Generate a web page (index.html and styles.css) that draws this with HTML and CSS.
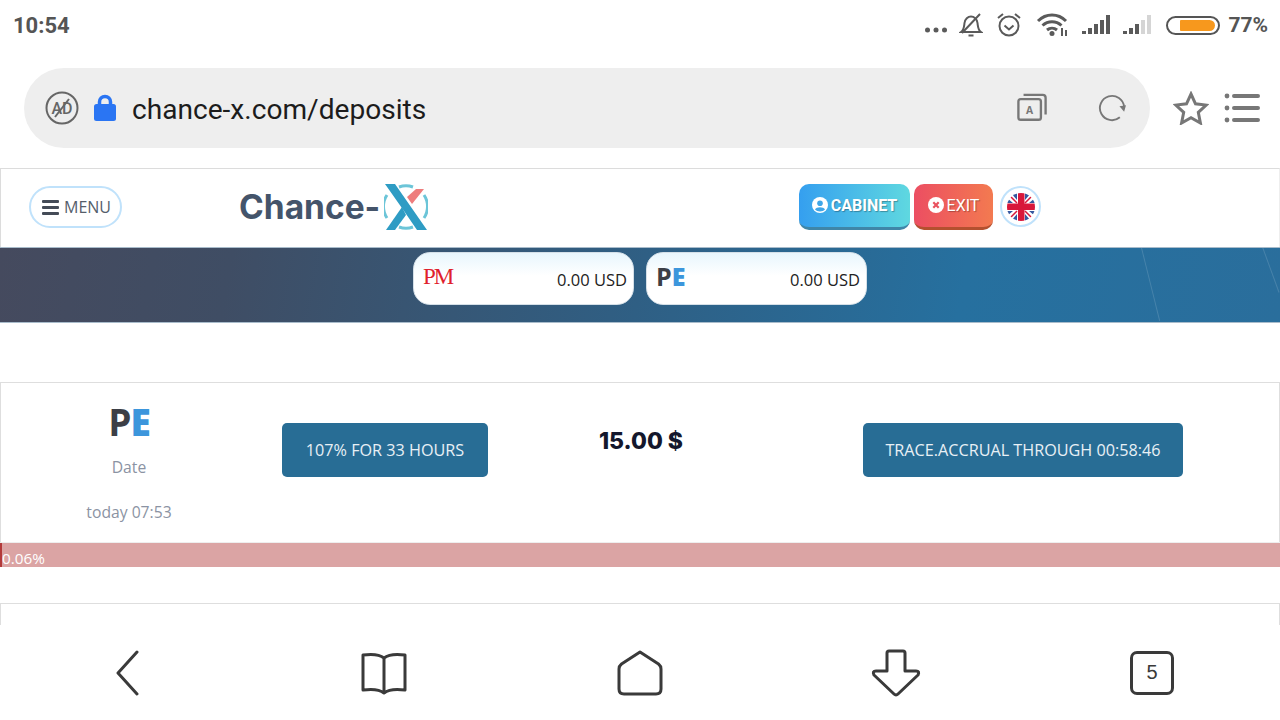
FILE: index.html
```html
<!DOCTYPE html>
<html>
<head>
<meta charset="utf-8">
<title>chance-x.com/deposits</title>
<link rel="stylesheet" href="styles.css">
</head>
<body>

<!-- phone status bar -->
<div class="statusbar">
  <span class="clock">10:54</span>
  <div class="status-icons">
    <svg class="ico-dots" width="24" height="8" viewBox="0 0 24 8"><circle cx="3.500" cy="4" r="2.500"/><circle cx="12" cy="4" r="2.500"/><circle cx="20.500" cy="4" r="2.500"/></svg>
    <svg class="ico-bell" width="24" height="26" viewBox="0 0 24 26"><path d="M2 20c3-2 3-5 3.500-9C6 7 9 4.500 12 4.500S18 7 18.500 11c.5 4 .5 7 3.500 9z"/><path d="M9.500 23.500h5M3 21L21 2"/></svg>
    <svg class="ico-alarm" width="26" height="26" viewBox="0 0 26 26"><circle cx="13" cy="14" r="9.500"/><path d="M8.500 13.500l4.500 4 4.500-4M2 6l5-4M24 6l-5-4"/></svg>
    <svg class="ico-wifi" width="34" height="24" viewBox="0 0 34 24"><path d="M2 8c8-8 20-8 28 0M6.500 12.500c5.500-5 13.500-5 19 0M11 17c3-2.500 7-2.500 10 0"/><circle cx="16" cy="20.500" r="2.500" class="fill"/><path d="M26 15v8M30 17v6" class="thin"/></svg>
    <svg class="ico-signal" width="30" height="22" viewBox="0 0 30 22"><rect x="0" y="17" width="4" height="3"/><rect x="6" y="14" width="4" height="6"/><rect x="12" y="10" width="4" height="10"/><rect x="18" y="6" width="4" height="14"/><rect x="24" y="1" width="4" height="19"/></svg>
    <svg class="ico-signal" width="30" height="22" viewBox="0 0 30 22"><rect x="0" y="17" width="4" height="3"/><rect x="6" y="14" width="4" height="6"/><rect x="12" y="10" width="4" height="10"/><rect x="18" y="6" width="4" height="14" class="off"/><rect x="24" y="1" width="4" height="19" class="off"/></svg>
    <div class="battery"><div class="battery-fill"></div></div>
    <span class="battery-pct">77%</span>
  </div>
</div>

<!-- browser toolbar -->
<div class="toolbar">
  <div class="urlbar">
    <svg class="ico-ad" width="34" height="34" viewBox="0 0 34 34"><circle cx="17" cy="17" r="15.500"/><text x="17" y="22.500" text-anchor="middle">AD</text><path d="M10 26L24 8"/></svg>
    <svg class="ico-lock" width="24" height="28" viewBox="0 0 24 28"><path d="M6.500 12V8a5.500 5.500 0 0 1 11 0v4" class="shackle"/><rect x="1" y="10" width="22" height="17" rx="2.500"/></svg>
    <span class="url">chance-x.com/deposits</span>
    <svg class="ico-tabs" width="30" height="30" viewBox="0 0 32 32"><rect x="1.500" y="6.500" width="24" height="22" rx="2.500"/><path d="M7 2h20.500a3 3 0 0 1 3 3v18"/><text x="13.500" y="22" text-anchor="middle">A</text></svg>
    <svg class="ico-reload" width="28" height="28" viewBox="0 0 30 30"><path d="M23.400 25A13 13 0 1 1 28 14"/><path d="M23 13l7-1-2 7z" class="fill"/></svg>
  </div>
  <svg class="ico-star" width="36" height="34" viewBox="0 0 36 34"><path d="M18 3l4.500 9.800 10.700 1.300-7.900 7.300 2.100 10.600L18 26.700 8.600 32l2.100-10.600-7.900-7.300 10.700-1.300z"/></svg>
  <svg class="ico-list" width="36" height="30" viewBox="0 0 36 30"><circle cx="3" cy="3" r="2.400"/><circle cx="3" cy="15" r="2.400"/><circle cx="3" cy="27" r="2.400"/><path d="M10 3h24M10 15h24M10 27h24"/></svg>
</div>

<!-- site -->
<div class="site">
  <div class="site-header">
    <a class="menu-btn"><span class="burger"><i></i><i></i><i></i></span>MENU</a>
    <div class="logo">
      <span class="logo-text">Chance-</span>
      <svg class="logo-x" width="44" height="48" viewBox="0 0 44 48">
        <path d="M3 12A20.500 20.500 0 0 0 3 35M40 12A20.500 20.500 0 0 1 40 35M15 4a20.500 20.500 0 0 1 14 0M15 44a20.500 20.500 0 0 0 14 0" class="ring"/>
        <path d="M1 1h10l32 46H33L20 28z" class="bar"/>
        <path d="M2 47h9l11-15-4-8z" class="bar"/>
        <path d="M32 6h8L28 21l-5-7z" class="red"/>
      </svg>
    </div>
    <div class="header-actions">
      <a class="hbtn cabinet">
        <svg width="16" height="16" viewBox="0 0 16 16"><circle cx="8" cy="8" r="8" fill="#fff"/><circle cx="8" cy="6.200" r="2.800" fill="#3fa6e8"/><path d="M3 12.500c1.500-3 8.500-3 10 0-2 2.500-8 2.500-10 0z" fill="#3fa6e8"/></svg>
        CABINET
      </a>
      <a class="hbtn exit">
        <svg width="16" height="16" viewBox="0 0 16 16"><circle cx="8" cy="8" r="8" fill="#fff"/><path d="M5.300 5.300l5.400 5.400M10.700 5.300l-5.400 5.400" stroke="#e9525f" stroke-width="2.200"/></svg>
        EXIT
      </a>
      <span class="flag">
        <svg width="28" height="28" viewBox="0 0 28 28">
          <defs><clipPath id="flagclip"><circle cx="14" cy="14" r="14"/></clipPath></defs>
          <g clip-path="url(#flagclip)">
            <rect width="28" height="28" fill="#fff"/>
            <path d="M4 0l6 7V0zM24 0l-6 7V0zM4 28l6-7v7zM24 28l-6-7v7zM0 5l6 5H0zM28 5l-6 5h6zM0 23l6-5H0zM28 23l-6-5h6z" fill="#35579f"/>
            <path d="M0 0l10 10M28 0L18 10M0 28l10-10M28 28L18 18" stroke="#d8173a" stroke-width="1.500"/>
            <rect x="11" width="6.500" height="28" fill="#d8173a"/>
            <rect y="10.500" width="28" height="6.500" fill="#d8173a"/>
          </g>
        </svg>
      </span>
    </div>
  </div>

  <div class="banner">
    <div class="balance">
      <span class="pm">PM</span>
      <span class="amount">0.00 USD</span>
    </div>
    <div class="balance">
      <span class="pe">P<b>E</b></span>
      <span class="amount">0.00 USD</span>
    </div>
    <i class="streak s1"></i>
    <i class="streak s2"></i>
  </div>

  <div class="deposit">
    <div class="dep-system">
      <span class="pe pe-big">P<b>E</b></span>
      <span class="muted dep-label">Date</span>
      <span class="muted">today 07:53</span>
    </div>
    <div class="dep-plan"><a class="dep-btn">107% FOR 33 HOURS</a></div>
    <div class="dep-sum">15.00 $</div>
    <div class="dep-next"><a class="dep-btn">TRACE.ACCRUAL THROUGH 00:58:46</a></div>
  </div>
  <div class="progress">
    <div class="progress-bar" style="width:0.06%"></div>
    <span class="progress-text">0.06%</span>
  </div>
  <div class="deposit next-card"></div>
</div>

<!-- browser bottom bar -->
<div class="bottombar">
  <svg width="26" height="46" viewBox="0 0 26 46"><path d="M22 2L3 23l19 21"/></svg>
  <svg width="46" height="44" viewBox="0 0 46 44"><path d="M23 7C18 3 9 3 2 4v35c7-1 16-1 21 3 5-4 14-4 21-3V4C37 3 28 3 23 7zM23 7v35"/></svg>
  <svg width="46" height="46" viewBox="0 0 46 46"><path d="M23 2L4.500 14Q2 16 2 19v20q0 5 5 5h32q5 0 5-5V19q0-3-2.500-5z"/></svg>
  <svg width="50" height="48" viewBox="0 0 50 48"><path d="M16 4q0-2 2-2h14q2 0 2 2v18h11q4 0 2 4L27 45q-2 2-4 0L3 26q-2-4 2-4h11z"/></svg>
  <div class="tabcount">5</div>
</div>

</body>
</html>
```

FILE: styles.css
```css
html, body {
	margin: 0;
	padding: 0;
	height: 720px;
	overflow: hidden;
	background: #fff;
	font-family: "Open Sans", sans-serif;
}

svg {
	display: block;
	flex: none;
}

/* status bar */
.statusbar {
	height: 50px;
	display: flex;
	align-items: center;
	justify-content: space-between;
	padding: 0 12px 0 13px;
	color: #555;
}

.clock {
	font: 700 22px "Roboto", sans-serif;
}

.status-icons {
	display: flex;
	align-items: center;
}

.status-icons svg {
	fill: none;
	stroke: #5a5a5a;
	stroke-width: 2;
}

.status-icons .ico-dots {
	fill: #5a5a5a;
	stroke: none;
	margin-top: 10px;
}

.ico-bell { margin-left: 11px; }
.status-icons .ico-alarm { margin-left: 13px; }
.status-icons .ico-wifi { margin-left: 14px; stroke-width: 3; }
.ico-wifi .fill { fill: #5a5a5a; stroke: none; }
.ico-wifi .thin { stroke-width: 2; }

.status-icons .ico-signal {
	fill: #5a5a5a;
	stroke: none;
	margin-left: 11.500px;
}

.ico-signal .off { fill: #d5d5d5; }

.battery {
	width: 54px;
	height: 19px;
	box-sizing: border-box;
	border: 2px solid #555;
	border-radius: 10px;
	padding: 2px 3px 2px 12px;
	margin-left: 13px;
}

.battery-fill {
	height: 100%;
	background: #f7981d;
	border-radius: 1px 6px 6px 1px;
}

.battery-pct {
	font: 700 21px "Roboto", sans-serif;
	margin-left: 8px;
}

/* browser toolbar */
.toolbar {
	height: 118px;
	box-sizing: border-box;
	padding: 18px 20px 20px 24px;
	display: flex;
	align-items: center;
}

.urlbar {
	width: 1126px;
	height: 80px;
	background: #eeeeee;
	border-radius: 40px;
	display: flex;
	align-items: center;
	padding-left: 21px;
	box-sizing: border-box;
	flex: none;
}

.ico-ad {
	fill: none;
	stroke: #666;
	stroke-width: 2;
}

.ico-ad text {
	font: 500 16px "Roboto", sans-serif;
	fill: #666;
	stroke: none;
}

.ico-lock {
	margin-left: 14px;
	fill: #2a75f3;
}

.ico-lock .shackle {
	fill: none;
	stroke: #2a75f3;
	stroke-width: 3.500;
}

.url {
	margin-left: 15px;
	margin-top: 3px;
	font: 400 28.100px "Roboto", sans-serif;
	color: #1c1c1c;
	width: 885px;
	flex: none;
}

.ico-tabs, .ico-reload, .ico-star, .ico-list {
	fill: none;
	stroke: #777;
	stroke-width: 2.500;
}

.ico-tabs text {
	font: 700 11px "Open Sans", sans-serif;
	fill: #777;
	stroke: none;
}

.ico-reload { margin-left: 51px; stroke-width: 2; }
.ico-reload .fill { fill: #777; stroke: none; }

.ico-star { margin-left: 23px; stroke-width: 3; }
.ico-list { margin-left: 15px; fill: #777; }
.ico-list path { stroke-width: 4; fill: none; stroke-linecap: round; }
.ico-list circle { stroke: none; }

/* site */
.site {
	height: 457px;
	overflow: hidden;
}

.site-header {
	height: 79px;
	box-sizing: border-box;
	border: 1px solid #dcdcdc;
	border-bottom: 0;
	border-right-color: #eee;
	display: flex;
	align-items: center;
	padding: 0 0 2px 28px;
}

.menu-btn {
	width: 93px;
	height: 42px;
	box-sizing: border-box;
	border: 2px solid #c0e2fb;
	border-radius: 21px;
	display: flex;
	align-items: center;
	padding-left: 11px;
	color: #555e6b;
	font-size: 16px;
}

.burger {
	width: 17px;
	margin-right: 5px;
}

.burger i {
	display: block;
	height: 3px;
	background: #444b57;
	margin: 3px 0;
	border-radius: 1px;
}

.logo {
	display: flex;
	align-items: center;
	margin-left: 117px;
	width: 301px;
}

.logo-text {
	font: 700 33.500px "Inter", sans-serif;
	color: #44546a;
	margin-right: 4px;
}

.logo-x .ring {
	fill: none;
	stroke: #6cc5d8;
	stroke-width: 3;
}

.logo-x .bar { fill: #2e9cc4; }
.logo-x .red { fill: #ee7d7d; }

.header-actions {
	display: flex;
	align-items: center;
	margin-left: 259px;
	margin-top: -1px;
}

.hbtn {
	height: 46px;
	box-sizing: border-box;
	border-radius: 10px;
	display: flex;
	align-items: center;
	justify-content: center;
	gap: 3px;
	color: #fff;
	font: 500 16px "Roboto", sans-serif;
	text-shadow: 1px 1px 1px rgba(0,0,0,.3);
}

.hbtn.cabinet {
	width: 111px;
	background: linear-gradient(90deg, #359fef, #5fd8e0);
	border-bottom: 3px solid #3f86a8;
	font-weight: 700;
}

.hbtn.exit {
	width: 79px;
	margin-left: 4px;
	background: linear-gradient(90deg, #ec4e62, #f37a50);
	border-bottom: 3px solid #b4502f;
	font-weight: 400;
}

.flag {
	width: 41px;
	height: 41px;
	box-sizing: border-box;
	border: 2px solid #c0e2fb;
	border-radius: 50%;
	display: flex;
	align-items: center;
	justify-content: center;
	margin-left: 7px;
}

.banner {
	position: relative;
	height: 76px;
	box-sizing: border-box;
	background: linear-gradient(100deg, #454a5e 0%, #3f4d64 18%, #2f5f84 50%, #26709f 75%, #2a6e9c 100%);
	border-top: 1px solid #a9bccb;
	border-bottom: 1px solid #a9bccb;
	display: flex;
	justify-content: center;
	gap: 12px;
	padding: 4px 0 0 0;
	overflow: hidden;
}

.balance {
	width: 221px;
	height: 53px;
	box-sizing: border-box;
	background: linear-gradient(180deg, #e8f6fd 0%, #fff 45%);
	border-radius: 17px;
	border: 1px solid #d5e0e8;
	display: flex;
	align-items: center;
	justify-content: space-between;
	padding: 0 6px 0 9px;
}

.amount {
	font-size: 16.500px;
	color: #222;
	margin-top: 2px;
}

.pm {
	font: 400 23px "Liberation Serif", serif;
	color: #e0202c;
	letter-spacing: -2px;
	margin-top: -4px;
}

.pe {
	font: 700 25px "Open Sans", sans-serif;
	color: #3c3f46;
	line-height: 1;
	margin-top: -4px;
}

.pe b { color: #3c96dc; }

.streak {
	position: absolute;
	width: 1px;
	background: rgba(255,255,255,.14);
}

.s1 { left: 1150px; top: -2px; height: 76px; transform: rotate(-14deg); }
.s2 { left: 1270px; top: -4px; height: 50px; transform: rotate(-20deg); }

/* deposit row */
.deposit {
	margin-top: 59px;
	height: 161px;
	box-sizing: border-box;
	border: 1px solid #dedede;
	border-bottom: 0;
	display: grid;
	grid-template-columns: 256px 256px 256px 1fr;
}

.dep-system {
	display: flex;
	flex-direction: column;
	align-items: center;
	padding-top: 20px;
}

.pe-big {
	font-size: 37px;
	letter-spacing: -1px;
	height: 38px;
	margin-top: 0;
}

.muted {
	color: #8b93a3;
	font-size: 15.700px;
	line-height: 22px;
}

.dep-label {
	margin-top: 15px;
	margin-bottom: 23px;
}

.dep-plan, .dep-next {
	padding-top: 40px;
	display: flex;
	justify-content: center;
}

.dep-next {
	padding-right: 2px;
}

.dep-btn {
	height: 54px;
	padding: 0 24px;
	display: flex;
	align-items: center;
	background: #286d95;
	border-radius: 5px;
	color: #e8f0f5;
	font-size: 16.200px;
	white-space: nowrap;
}

.dep-next .dep-btn {
	padding: 0 22px;
}

.dep-sum {
	text-align: center;
	padding-top: 44px;
	font: 800 23px "Inter", sans-serif;
	color: #14172c;
}

.progress {
	position: relative;
	height: 25px;
	margin-top: -1px;
	background: #dba4a4;
	border-top: 1px solid #eee;
	box-sizing: border-box;
}

.progress-bar {
	height: 100%;
	min-width: 2px;
	background: #b33a3a;
}

.progress-text {
	position: absolute;
	left: 2px;
	top: 4px;
	color: #fff;
	font-size: 15.300px;
	line-height: 22px;
}

.next-card {
	margin-top: 36px;
}

/* browser bottom bar */
.bottombar {
	height: 95px;
	display: grid;
	grid-template-columns: repeat(5, 256px);
	justify-items: center;
	align-items: center;
	background: #fff;
}

.bottombar svg {
	fill: none;
	stroke: #3a3a3a;
	stroke-width: 3;
	stroke-linejoin: round;
	stroke-linecap: round;
}

.tabcount {
	width: 44px;
	height: 44px;
	box-sizing: border-box;
	border: 3px solid #3a3a3a;
	border-radius: 7px;
	display: flex;
	align-items: center;
	justify-content: center;
	font: 400 20px "Liberation Sans", sans-serif;
	color: #3a3a3a;
}
```
